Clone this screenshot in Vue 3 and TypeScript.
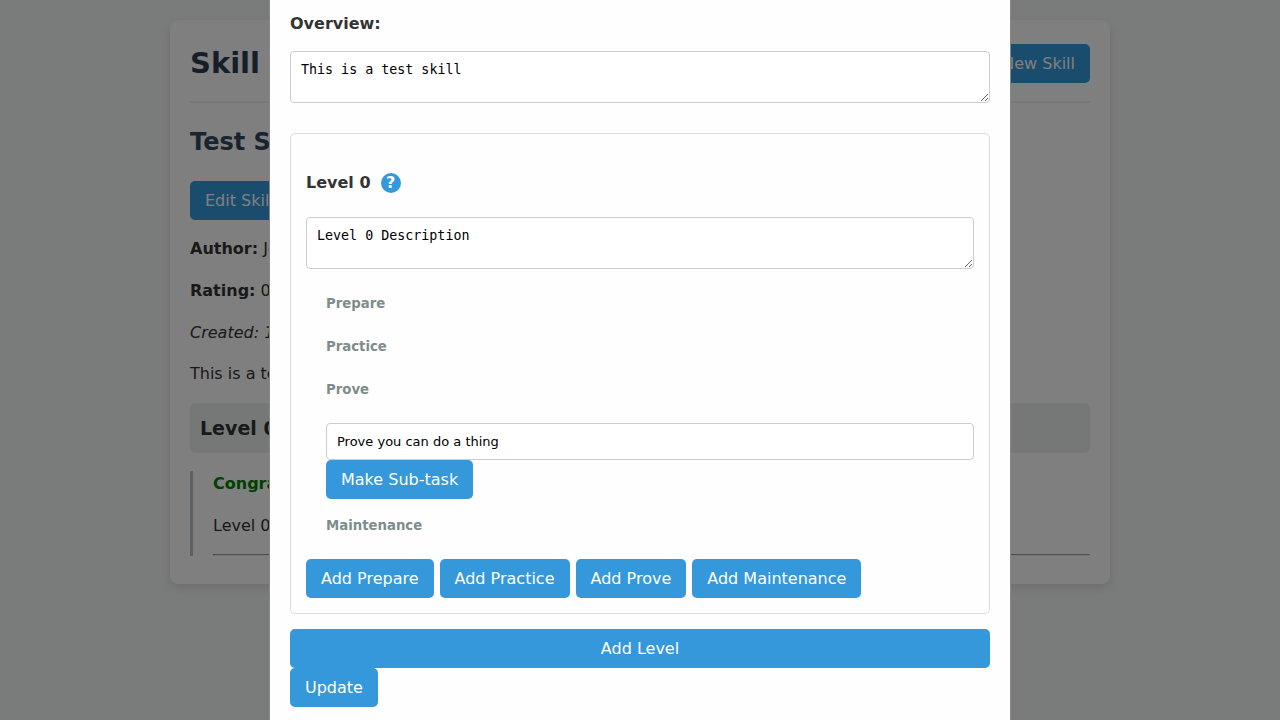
<script setup lang="ts">
import { ref } from 'vue'

const overview = ref('This is a test skill')
const levelDescription = ref('Level 0 Description')
const proveTask = ref('Prove you can do a thing')
const taskKinds: string[] = ['Prepare', 'Practice', 'Prove', 'Maintenance']
</script>

<template>
  <div class="page">
    <main class="card">
      <header class="card-header">
        <h1>Skill Tree</h1>
        <button type="button" class="btn">Add New Skill</button>
      </header>
      <h2>Test Skill</h2>
      <button type="button" class="btn">Edit Skill</button>
      <p><strong>Author:</strong> Joe</p>
      <p><strong>Rating:</strong> 0</p>
      <p><em>Created: 1/1</em></p>
      <p>This is a test</p>
      <h3>Level 0</h3>
      <section class="level-body">
        <p class="done">Congrats!</p>
        <p>Level 0</p>
        <hr />
      </section>
    </main>

    <div class="overlay">
      <form class="modal" role="dialog" aria-label="Edit Skill" @submit.prevent>
        <label class="overview-label" for="overview">Overview:</label>
        <textarea id="overview" v-model="overview" rows="2"></textarea>

        <section class="level">
          <h4>
            <label for="level-description">Level 0</label>
            <button type="button" class="help" aria-label="Help">?</button>
          </h4>
          <textarea id="level-description" v-model="levelDescription" rows="2"></textarea>
          <div class="tasks">
            <template v-for="kind in taskKinds" :key="kind">
              <h5>{{ kind }}</h5>
              <div v-if="kind === 'Prove'" class="task">
                <input v-model="proveTask" type="text" aria-label="Prove task" />
                <button type="button" class="btn">Make Sub-task</button>
              </div>
            </template>
          </div>
          <div class="actions">
            <button v-for="kind in taskKinds" :key="kind" type="button" class="btn">Add {{ kind }}</button>
          </div>
        </section>

        <button type="button" class="btn wide">Add Level</button>
        <button type="submit" class="btn">Update</button>
      </form>
    </div>
  </div>
</template>

<style>
html,
body {
  height: 100%;
  overflow: hidden;
}

body {
  margin: 0;
  background: #f4f7f6;
}
</style>

<style scoped>
.page {
  padding: 20px;
  color: #333;
  font-family: 'DejaVu Sans', sans-serif;
  font-size: 16px;
  line-height: 1.6;
}

.card {
  box-sizing: border-box;
  max-width: 940px;
  margin: 0 auto;
  padding: 20px;
  border-radius: 8px;
  background: #fff;
  box-shadow: 0 4px 8px rgba(0, 0, 0, 0.1);
}

.card-header {
  display: flex;
  align-items: center;
  justify-content: space-between;
  margin-bottom: 20px;
  padding-bottom: 15px;
  border-bottom: 2px solid #eee;
}

h1 {
  margin: 0;
  color: #2c3e50;
  font-size: 29px;
}

h2 {
  margin: 0 0 20px;
  color: #34495e;
  font-size: 24px;
  line-height: 38px;
}

h3 {
  margin: 16px 0 18px;
  padding: 10px;
  border-radius: 5px;
  background: #ecf0f1;
  font-size: 19px;
}

p {
  margin: 16px 0;
}

.level-body {
  margin-bottom: 8px;
  padding-left: 20px;
  border-left: 3px solid #bdc3c7;
}

.level-body p:first-child {
  margin-top: 0;
}

.level-body .done {
  color: green;
  font-weight: bold;
}

.level-body hr {
  margin: 0;
}

.btn {
  display: block;
  padding: 10px 15px;
  border: 0;
  border-radius: 5px;
  background: #3498db;
  color: #fff;
  font-family: inherit;
  font-size: 16px;
  line-height: normal;
  cursor: pointer;
}

.overlay {
  position: fixed;
  inset: 0;
  display: flex;
  align-items: stretch;
  justify-content: center;
  overflow: hidden;
  background: rgba(0, 0, 0, 0.5);
}

.modal {
  box-sizing: border-box;
  width: 100%;
  max-width: 742px;
  padding: 11px 20px 20px;
  border: 1px solid #888;
  border-width: 0 1px;
  background: #fefefe;
}

.overview-label {
  display: block;
  margin-bottom: 14px;
  font-weight: bold;
}

textarea,
input {
  display: block;
  box-sizing: border-box;
  width: 100%;
  margin: 0;
  padding: 10px;
  border: 1px solid #ccc;
  border-radius: 4px;
  background: #fff;
  color: #000;
}

textarea {
  font-family: 'DejaVu Sans Mono', monospace;
  resize: vertical;
}

input {
  font-family: 'DejaVu Sans', sans-serif;
  font-size: 13px;
}

.level {
  margin: 30px 0 15px;
  padding: 15px;
  border: 1px solid #ddd;
  border-radius: 5px;
}

h4 {
  display: flex;
  align-items: center;
  gap: 10px;
  min-height: 26px;
  margin: 21px 0;
}

.help {
  width: 20px;
  height: 20px;
  padding: 0;
  border: 0;
  border-radius: 50%;
  background: #3498db;
  color: #fff;
  font-family: inherit;
  font-size: 16px;
  font-weight: bold;
  line-height: 20px;
  text-align: center;
}

.tasks {
  margin: 24px 0 23px;
  padding-left: 20px;
}

h5 {
  color: #7f8c8d;
}

.task + h5 {
  margin-top: 16px;
}

.actions {
  display: flex;
  flex-wrap: wrap;
  gap: 6px;
}

.wide {
  width: 100%;
}
</style>
